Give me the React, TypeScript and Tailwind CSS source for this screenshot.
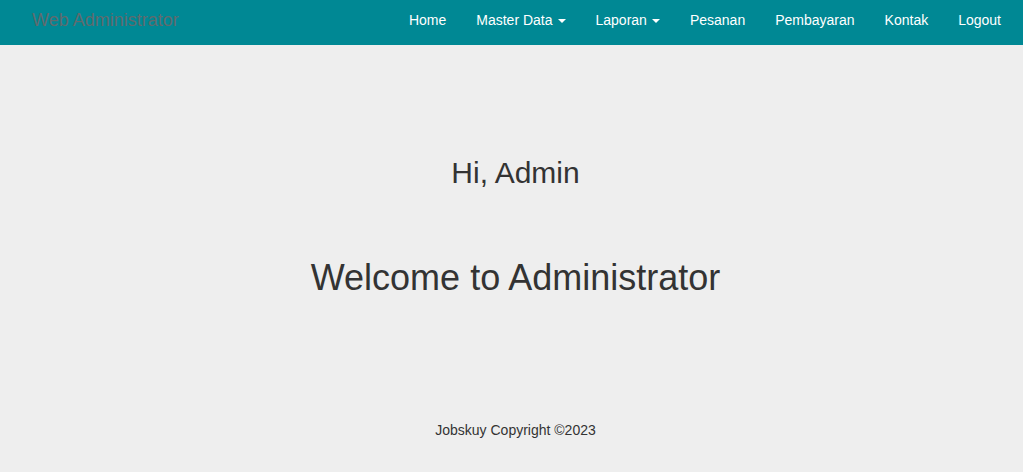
import React from "react";

const Caret = () => (
  <span className="ml-[5px] inline-block h-0 w-0 border-x-[4px] border-t-[4px] border-x-transparent border-t-white align-middle" />
);

export default function App() {
  const links: { label: string; caret?: boolean }[] = [
    { label: "Home" },
    { label: "Master Data", caret: true },
    { label: "Laporan", caret: true },
    { label: "Pesanan" },
    { label: "Pembayaran" },
    { label: "Kontak" },
    { label: "Logout" },
  ];
  return (
    <div
      className="min-h-[472px] bg-[#eeeeee] text-[#333333]"
      style={{ fontFamily: '"Liberation Sans", Arial, sans-serif' }}
    >
      <nav className="flex h-[45px] items-start justify-between bg-[#008894] pl-[32px] pr-[7px]">
        <a className="pt-[10px] text-[18px] leading-[20px] text-[#5f6b6e]">Web Administrator</a>
        <ul className="flex">
          {links.map((l) => (
            <li key={l.label}>
              <a className="block px-[15px] pt-[10px] text-[14px] leading-[20px] text-white">
                {l.label}
                {l.caret && <Caret />}
              </a>
            </li>
          ))}
        </ul>
      </nav>
      <main className="flex flex-col items-center pl-[8px]">
        <h2 className="mt-[111px] text-[30px] leading-[33px]">Hi, Admin</h2>
        <h1 className="mt-[69px] text-[36px] leading-[40px]">Welcome to Administrator</h1>
        <footer className="mt-[122px] text-[14px] leading-[20px]">Jobskuy Copyright ©2023</footer>
      </main>
    </div>
  );
}
